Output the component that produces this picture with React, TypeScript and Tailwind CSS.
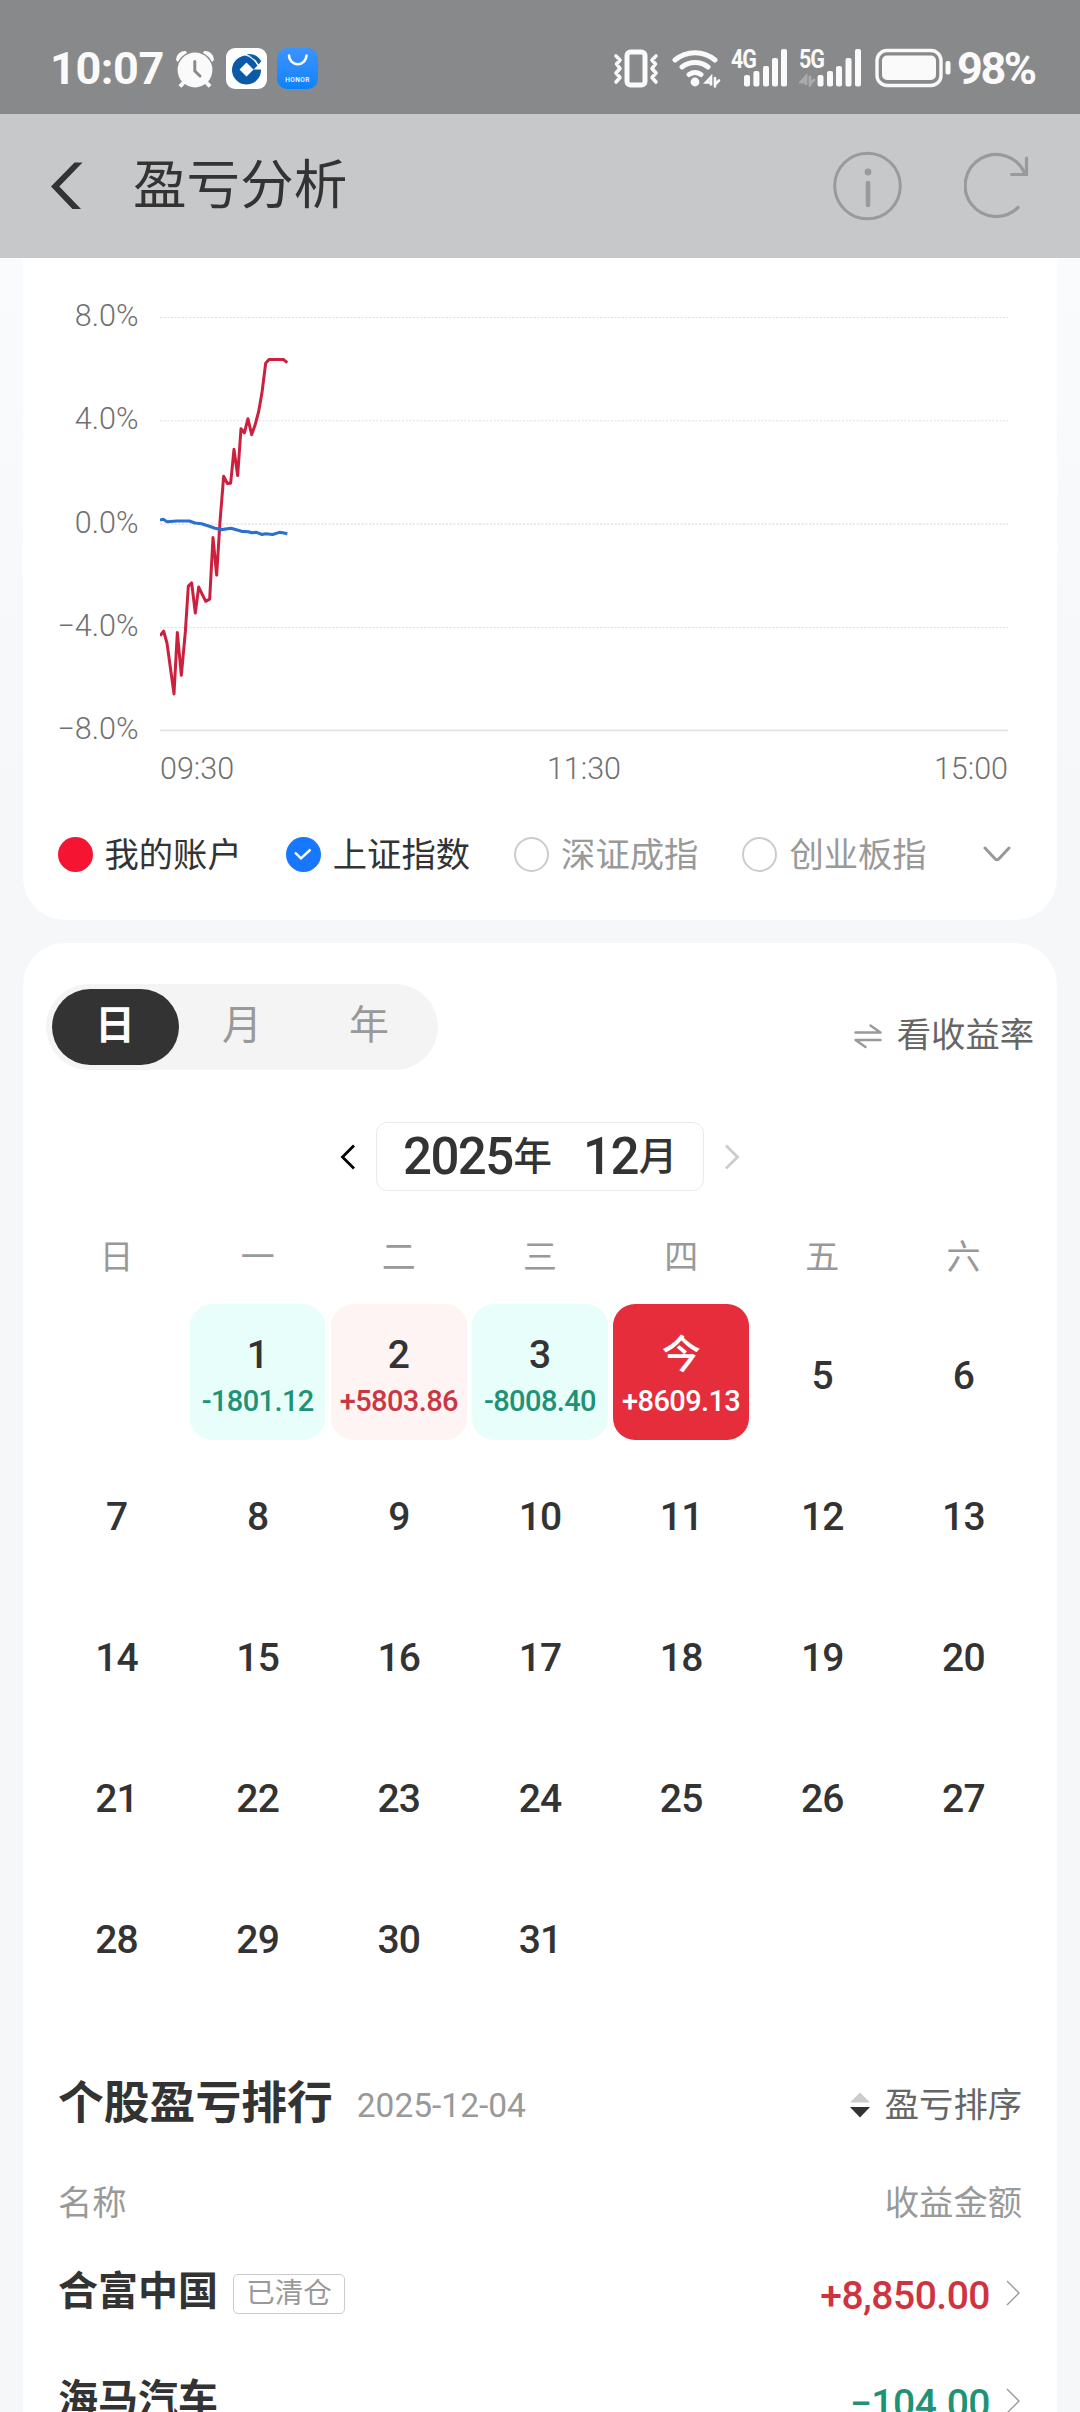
import React from "react";

const MY_ACCOUNT =
  "480,1091 491,1078 501,1113 522,1260 532,1082 544,1206 556,1080 565,947 575,938 586,1025 596,950 617,991 629,985 639,806 650,915 660,760 671,628 682,649 692,648 702,550 713,626 723,490 733,502 744,461 755,507 765,480 776,440 786,385 797,300 807,289 850,289 862,298";
const INDEX_LINE =
  "480,755 490,753 501,760 530,758 568,758 585,764 605,766 628,773 645,779 665,783 693,779 725,788 745,789 755,792 770,791 786,797 797,795 818,797 838,791 848,792 862,795";

function StatusBar() {
  return (
    <div className="h-[114px] shrink-0 bg-[#88898b] flex items-start pt-[48px] pl-[50px] pr-[41px] text-[#fafafa]">
      <span className="w-[126px] h-[41px] leading-[42px] text-[45px] font-bold tracking-[-0.4px] whitespace-nowrap">10:07</span>
      <svg width="38" height="41" viewBox="0 0 38 41" fill="#fafafa">
        <path d="M0 12 A9 9 0 0 1 10 3 L11 5 A20 20 0 0 0 2 14Z M38 12 A9 9 0 0 0 28 3 L27 5 A20 20 0 0 1 36 14Z" />
        <circle cx="19" cy="22" r="17.4" />
        <path d="M8 34 L4 38.5 M30 34 L34 38.5" stroke="#fafafa" strokeWidth="4" />
        <path d="M18.8 13.5 V23 L24 28" stroke="#88898b" strokeWidth="3" fill="none" strokeLinecap="round" strokeLinejoin="round" />
      </svg>
      <svg className="ml-[12px]" width="41" height="41" viewBox="0 0 41 41">
        <rect width="41" height="41" rx="9" fill="#fff" />
        <path d="M27 9 A14.5 14.5 0 1 0 35 21.5 H27.5 L20.5 28.5 L13.5 21.5 L20.5 14.5 L27.5 21.5 L31.5 17.5 Z" fill="#0a5aa8" />
        <path d="M20.5 6.2 Q30 4.5 35.3 13.2 L32.5 16.4 Q27.5 8 20.5 6.2Z" fill="#0a5aa8" />
        <path d="M20 7.2 Q27 9 31.8 17.2" stroke="#fff" strokeWidth="1.1" fill="none" />
      </svg>
      <div className="relative ml-[10px] h-[41px] w-[41px] rounded-[10px] bg-linear-to-b from-[#3b93fd] to-[#0683fb] flex flex-col items-center">
        <svg width="41" height="28" viewBox="0 0 41 28" fill="none" stroke="#fff">
          <path d="M12 7.5 A8.6 8.6 0 0 0 29.5 7.5" strokeWidth="2.6" strokeLinecap="round" />
        </svg>
        <span className="text-[6.5px] leading-[8px] font-medium tracking-[0.4px] text-white">HONOR</span>
      </div>
      <svg className="ml-auto" width="47" height="41" viewBox="0 0 47 41" fill="none" stroke="#fafafa">
        <rect x="14" y="4" width="18" height="33" rx="3.5" strokeWidth="5" />
        <path d="M3 8 L7 12 L3.5 16 L7 20.5 L3 25 L7 29.5 L3 34 M43 8 L39 12 L42.5 16 L39 20.5 L43 25 L39 29.5 L43 34" strokeWidth="3.6" strokeLinecap="round" strokeLinejoin="round" />
      </svg>
      <svg className="ml-[12px]" width="49" height="41" viewBox="0 0 49 41" fill="none" stroke="#fafafa" strokeWidth="5" strokeLinecap="round">
        <path d="M3 12 A31 31 0 0 1 43 12 M10 19 A21 21 0 0 1 36 19 M17 26.5 A11 11 0 0 1 29 26.5" />
        <circle cx="23" cy="34" r="4.4" fill="#fafafa" stroke="none" />
        <path d="M39 29 V37.5 L39 29 L34 34.5 H38 M43 30 V38.5 M43 36.5 L47 32.5" strokeWidth="2.6" />
      </svg>
      <div className="relative ml-[10px] h-[41px] w-[57px]">
        <span className="absolute left-0 top-0 text-[25px] leading-[24px] font-bold tracking-[-1.2px] origin-left scale-x-[.86]">4G</span>
        <svg width="57" height="41" viewBox="0 0 57 41" fill="#fafafa">
          <rect x="13" y="27" width="6" height="11.5" rx="2" /><rect x="22.4" y="23" width="6" height="15.5" rx="2" /><rect x="32" y="18" width="6" height="20.5" rx="2" /><rect x="41" y="10" width="6" height="28.5" rx="2" /><rect x="50" y="1" width="6" height="37.5" rx="2" />
        </svg>
      </div>
      <div className="relative ml-[11px] h-[41px] w-[63px]">
        <span className="absolute left-0 top-0 text-[25px] leading-[24px] font-bold tracking-[-1.2px] origin-left scale-x-[.86]">5G</span>
        <svg width="63" height="41" viewBox="0 0 63 41" fill="#fafafa">
          <path d="M7 28.5 V37 L7 28.5 L2 34 H6 M11 29 V37.5 M11 36 L15 32" stroke="#a9aaab" strokeWidth="2.8" fill="none" strokeLinecap="round" />
          <rect x="18.5" y="27" width="6" height="11.5" rx="2" /><rect x="28" y="23" width="6" height="15.5" rx="2" /><rect x="37" y="18" width="6" height="20.5" rx="2" /><rect x="46.5" y="10" width="6" height="28.5" rx="2" /><rect x="56" y="1" width="6" height="37.5" rx="2" />
        </svg>
      </div>
      <svg className="ml-[13px]" width="76" height="41" viewBox="0 0 76 41">
        <rect x="2" y="2.5" width="64" height="35" rx="10" fill="none" stroke="#fafafa" strokeWidth="3.4" />
        <rect x="7" y="7.5" width="54" height="24.5" rx="5" fill="#fafafa" />
        <rect x="70.5" y="13" width="5" height="13.5" rx="2" fill="#fafafa" />
      </svg>
      <span className="ml-[6px] w-[82px] h-[41px] leading-[42px] text-[45px] font-bold tracking-[-2.4px] whitespace-nowrap">98%</span>
    </div>
  );
}

function Header() {
  return (
    <div className="h-[144px] shrink-0 bg-[#c7c8ca] flex items-center pl-[51px] pr-[50px]">
      <svg width="34" height="48" viewBox="0 0 34 48">
        <path d="M0 24.5 L23.5 0.5 H31.5 L8.3 24.5 L30 47 H21.5 Z" fill="#333" />
      </svg>
      <h1 className="ml-[48px] text-[53.6px] leading-[60px] text-[#333]">盈亏分析</h1>
      <svg className="ml-auto" width="69" height="70" viewBox="0 0 69 70" fill="none" stroke="#999a9a">
        <circle cx="34.5" cy="35" r="32.8" strokeWidth="3" />
        <circle cx="35" cy="21" r="3.4" fill="#999a9a" stroke="none" />
        <path d="M35 32 V54" strokeWidth="4.6" strokeLinecap="round" />
      </svg>
      <svg className="ml-[62px]" width="66" height="70" viewBox="0 0 66 70" fill="none" stroke="#999a9a" strokeWidth="3.2" strokeLinecap="round">
        <path d="M54 56.5 A31 31 0 1 1 61 23 M62.5 7 V23.5 H47.5" />
      </svg>
    </div>
  );
}

function Chart() {
  const ticks = ["8.0%", "4.0%", "0.0%", "−4.0%", "−8.0%"];
  return (
    <div className="flex pt-[8px]">
      <div className="w-[115.5px] shrink-0 flex flex-col text-right text-[30.5px] font-light text-[#707070]">
        {ticks.map((t) => (
          <span key={t} className="h-[103.3px] leading-[99px]">{t}</span>
        ))}
      </div>
      <div className="ml-[21.5px] w-[848px]">
        <svg width="848" height="480" viewBox="480 17.4 2544 1394" preserveAspectRatio="none" className="block">
          {[167, 467, 767, 1067].map((y) => (
            <path key={y} d={`M480 ${y} H3024`} stroke="#dedede" strokeWidth="3" strokeDasharray="6 5" />
          ))}
          <path d="M480 1366 H3024" stroke="#e4e4e4" strokeWidth="5" />
          <polyline points={MY_ACCOUNT} fill="none" stroke="#cb213f" strokeWidth="9" strokeLinejoin="round" />
          <polyline points={INDEX_LINE} fill="none" stroke="#2b70cf" strokeWidth="9" strokeLinejoin="round" />
        </svg>
        <div className="mt-[3px] flex justify-between text-[30.5px] leading-[40px] font-light text-[#707070]">
          <span>09:30</span>
          <span>11:30</span>
          <span>15:00</span>
        </div>
      </div>
    </div>
  );
}

function Legend() {
  return (
    <div className="mt-[47px] flex items-center h-[36px] pl-[34.5px] text-[34.3px] text-[#333]">
      <div className="w-[228.3px] flex items-center gap-[12px]">
        <i className="h-[35px] w-[35px] rounded-full bg-[#f51432]" />
        <span className="pt-[3px]">我的账户</span>
      </div>
      <div className="w-[228.3px] flex items-center gap-[12px]">
        <i className="h-[35px] w-[35px] rounded-full bg-[#1877ff] flex items-center justify-center">
          <svg width="18" height="12" viewBox="0 0 18 12" fill="none" stroke="#fff" strokeWidth="2.4"><path d="M1 4.5 L7 10.3 L16.5 1.5" /></svg>
        </i>
        <span className="pt-[3px]">上证指数</span>
      </div>
      {["深证成指", "创业板指"].map((name) => (
        <div key={name} className="w-[228.3px] flex items-center gap-[12px] text-[#999]">
          <i className="h-[35px] w-[35px] rounded-full border-[2.5px] border-[#ccc]" />
          <span className="pt-[3px]">{name}</span>
        </div>
      ))}
      <svg className="ml-[12px]" width="28" height="18" viewBox="0 0 28 18" fill="none" stroke="#999" strokeWidth="3" strokeLinecap="round" strokeLinejoin="round">
        <path d="M2 3 L12.5 14.2 Q14 15.4 15.5 14.2 L26 3" />
      </svg>
    </div>
  );
}

function Tabs() {
  return (
    <div className="flex justify-between pt-[41px] pl-[23px] pr-[23px]">
      <div className="flex items-center h-[86px] w-[392px] rounded-full bg-[#f4f4f4] pl-[5.5px] text-[40px] text-[#999]">
        <span className="h-[75.5px] w-[127px] rounded-full bg-[#333] text-white font-bold text-center leading-[74px]">日</span>
        <span className="w-[127px] text-center leading-[74px] h-[76px]">月</span>
        <span className="w-[127px] text-center leading-[74px] h-[76px]">年</span>
      </div>
      <div className="flex items-center gap-[15px] pt-[17px] text-[34.3px] text-[#666]">
        <svg width="28" height="26" viewBox="0 0 28 26" fill="none" stroke="#999" strokeWidth="2.4" strokeLinecap="round" strokeLinejoin="round">
          <path d="M1.5 9.5 H26.5 L16.5 2.5 M26.5 17 H1.5 L11.5 24" />
        </svg>
        看收益率
      </div>
    </div>
  );
}

function MonthPicker() {
  return (
    <div className="mt-[52px] flex items-center justify-center text-[#333]">
      <svg width="15" height="26" viewBox="0 0 15 26" fill="none" stroke="#000" strokeWidth="2.8"><path d="M14 1.5 L2.5 13 L14 24.5" /></svg>
      <div className="mx-[21px] h-[69px] w-[328px] rounded-[11px] border border-[#eaeaea] flex items-center pl-[26px] whitespace-nowrap">
        <span className="text-[51px] leading-[69px] font-medium tracking-[-1.6px]">2025</span>
        <span className="text-[38.5px] leading-[69px] ml-[1px] font-medium">年</span>
        <span className="ml-[31px] text-[51px] leading-[69px] font-medium tracking-[-1.6px]">12</span>
        <span className="text-[38.5px] leading-[69px] font-medium ml-[1px]">月</span>
      </div>
      <svg width="15" height="26" viewBox="0 0 15 26" fill="none" stroke="#ccc" strokeWidth="2.8"><path d="M1 1.5 L12.5 13 L1 24.5" /></svg>
    </div>
  );
}

const RESULTS: Record<number, { amount: string; box: string; text: string }> = {
  1: { amount: "-1801.12", box: "bg-[#e7fefa]", text: "text-[#1f9276]" },
  2: { amount: "+5803.86", box: "bg-[#fff4f4]", text: "text-[#cb3643]" },
  3: { amount: "-8008.40", box: "bg-[#e7fefa]", text: "text-[#1f9276]" },
  4: { amount: "+8609.13", box: "bg-[#e52d3b]", text: "text-white" },
};

function Calendar() {
  const days = Array.from({ length: 31 }, (_, i) => i + 1);
  return (
    <div className="px-[23px]">
      <div className="mt-[42px] grid grid-cols-7 text-center text-[34px] leading-[49px] text-[#999]">
        {["日", "一", "二", "三", "四", "五", "六"].map((d) => (
          <span key={d}>{d}</span>
        ))}
      </div>
      <div className="mt-[19px] grid grid-cols-7 text-[#333]">
        <span />
        {days.map((d) => {
          const r = RESULTS[d];
          return (
            <div key={d} className="h-[141px] pt-[3px] pb-[2.5px] px-[2.8px]">
              {r ? (
                <div className={`h-full rounded-[22px] flex flex-col items-center pt-[28px] ${r.box}`}>
                  {d === 4 ? (
                    <span className="text-[39px] leading-[46px] font-medium text-white">今</span>
                  ) : (
                    <span className="text-[39px] leading-[46px] font-medium">{d}</span>
                  )}
                  <span className={`text-[29px] leading-[47px] font-medium tracking-[-0.6px] ${r.text}`}>{r.amount}</span>
                </div>
              ) : (
                <div className="h-full flex items-center justify-center pt-[9px] text-[39px] font-medium tracking-[-0.8px]">{d}</div>
              )}
            </div>
          );
        })}
      </div>
    </div>
  );
}

function Ranking() {
  const rows = [
    { name: "合富中国", closed: true, amount: "+8,850.00", color: "text-[#d03340]" },
    { name: "海马汽车", closed: false, amount: "−104.00", color: "text-[#1f9276]" },
  ];
  return (
    <div className="px-[35px]">
      <div className="mt-[67px] flex items-center h-[60px]">
        <h2 className="pt-[1px] text-[45.8px] leading-[62px] font-bold text-[#333]">个股盈亏排行</h2>
        <span className="ml-[24px] pt-[5px] text-[33.5px] leading-[55px] tracking-[0px] text-[#999]">2025-12-04</span>
        <svg className="ml-auto mt-[3px]" width="20" height="26" viewBox="0 0 20 26">
          <path d="M0 10.5 L10 0.5 L20 10.5Z" fill="#ccc" /><path d="M0 15 L10 25.5 L20 15Z" fill="#333" />
        </svg>
        <span className="ml-[15px] pt-[4px] text-[34.3px] leading-[55px] text-[#666]">盈亏排序</span>
      </div>
      <div className="mt-[45px] flex justify-between text-[34.3px] leading-[50px] text-[#999]">
        <span>名称</span>
        <span>收益金额</span>
      </div>
      <div className="mt-[11px]">
        {rows.map((r) => (
          <div key={r.name} className="flex items-center h-[108px]">
            <span className="text-[40px] leading-[60px] pb-[2px] font-bold text-[#333]">{r.name}</span>
            {r.closed && (
              <span className="ml-[15px] mt-[1px] h-[40px] w-[112px] rounded-[5px] border border-[#ccc] text-center text-[28.5px] leading-[37px] text-[#999]">已清仓</span>
            )}
            <span className={`ml-auto pt-[5px] text-[39px] leading-[60px] font-medium tracking-[-0.5px] ${r.color}`}>{r.amount}</span>
            <svg className="ml-[16px] mr-[2px]" width="14" height="26" viewBox="0 0 14 26" fill="none" stroke="#999" strokeWidth="1.4"><path d="M1 1 L13 13 L1 25" /></svg>
          </div>
        ))}
      </div>
    </div>
  );
}

export default function App() {
  return (
    <div className="h-[2412px] w-[1080px] overflow-hidden flex flex-col bg-[#f5f7f9] bg-linear-to-b from-[#f9fbfd] from-10% to-[#f5f7f9] to-35% font-[Roboto,'Noto_Sans_CJK_SC',sans-serif]">
      <StatusBar />
      <Header />
      <div className="mx-[23px] h-[662px] shrink-0 rounded-b-[42px] bg-white">
        <Chart />
        <Legend />
      </div>
      <div className="mx-[23px] mt-[23px] h-[1600px] shrink-0 rounded-t-[42px] bg-white">
        <Tabs />
        <MonthPicker />
        <Calendar />
        <Ranking />
      </div>
    </div>
  );
}
